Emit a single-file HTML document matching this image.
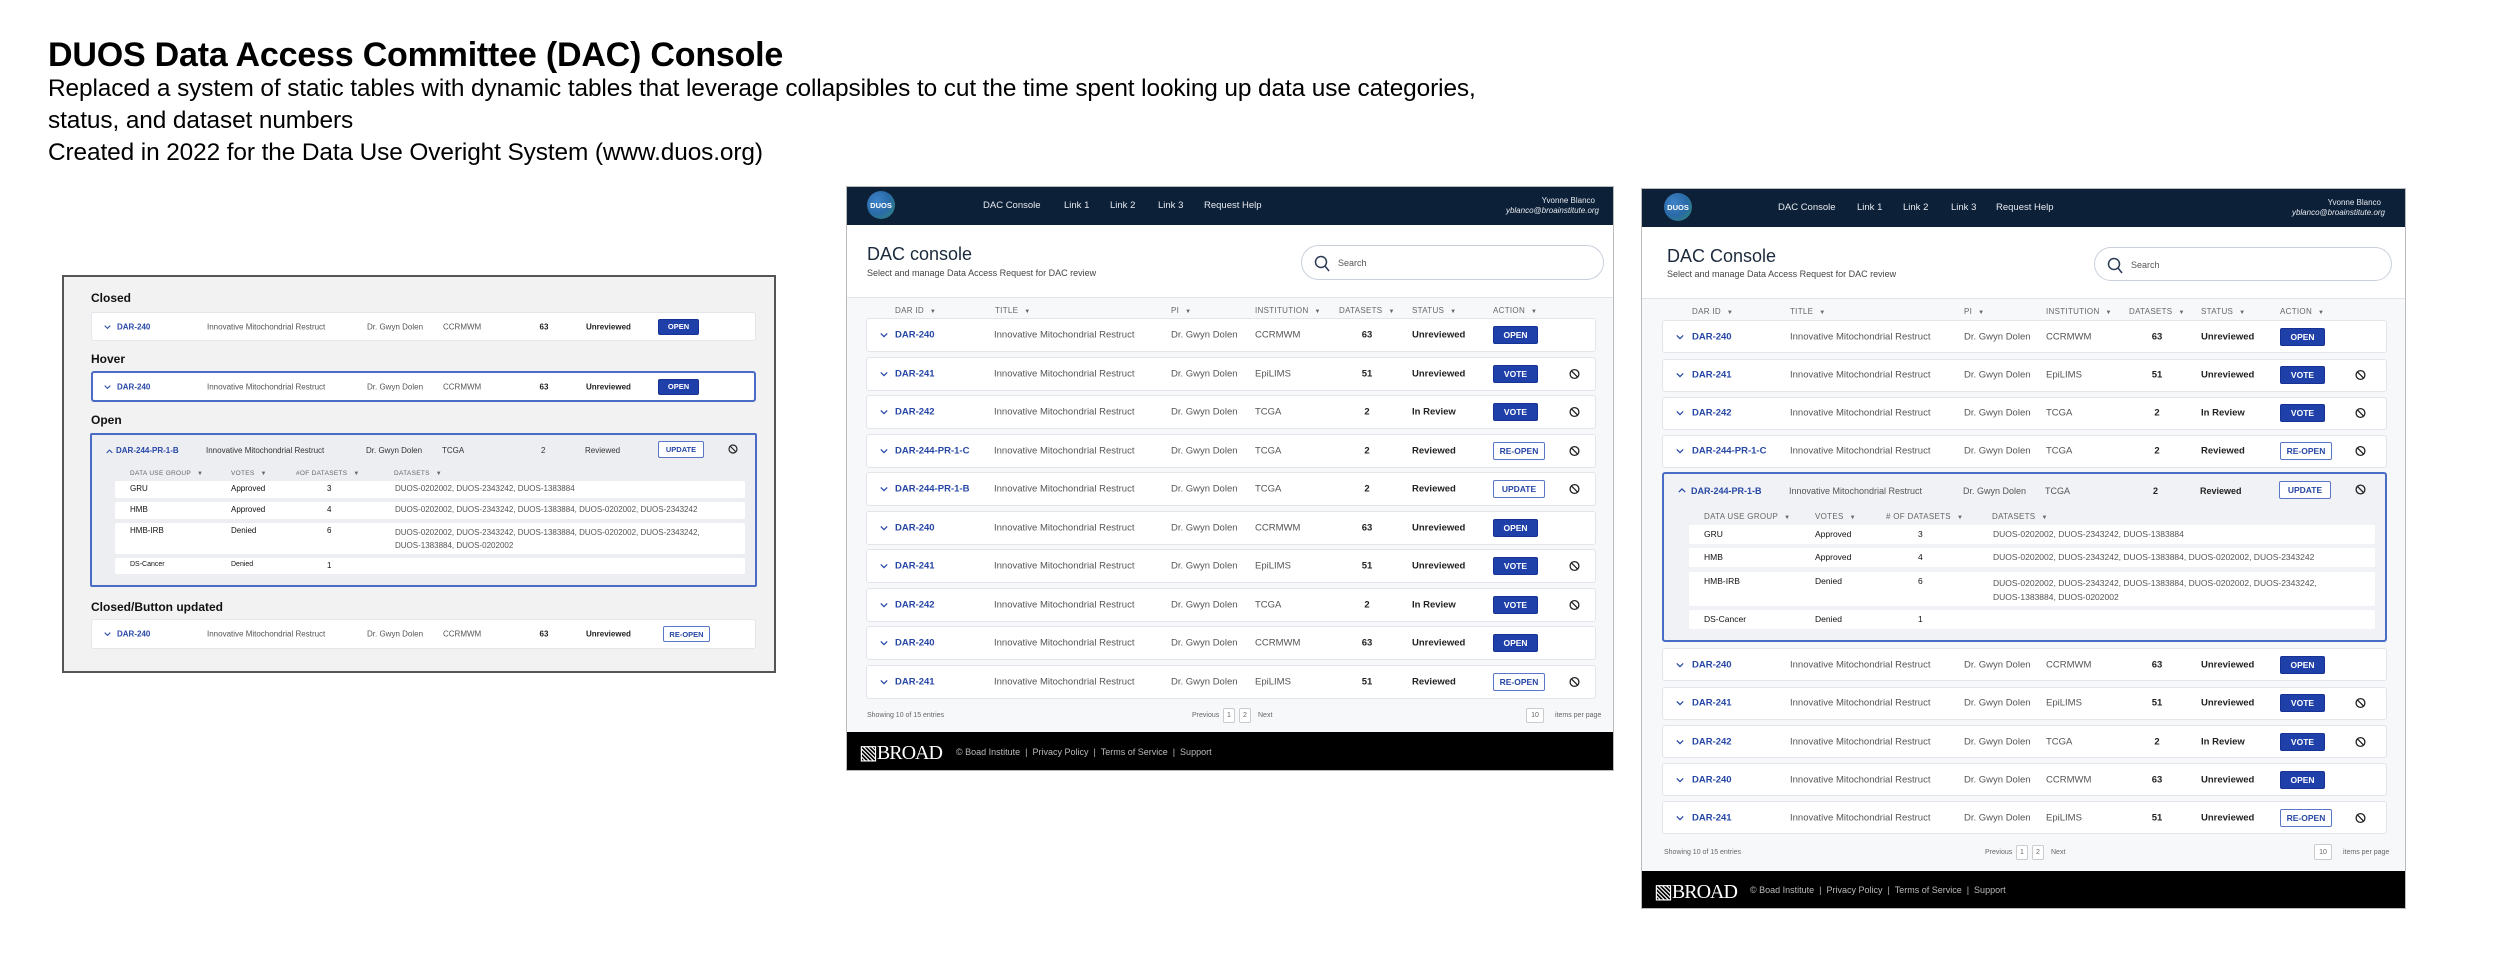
<!DOCTYPE html>
<html><head><meta charset="utf-8">
<style>
*{margin:0;padding:0;box-sizing:border-box}
body{width:2500px;height:974px;background:#fff;position:relative;overflow:hidden;font-family:"Liberation Sans",sans-serif;color:#111}
.a{position:absolute}
h1{position:absolute;left:48px;top:36px;font-size:34px;font-weight:bold;letter-spacing:-0.2px;color:#000}
.sub{position:absolute;left:48px;font-size:24.4px;color:#000;white-space:nowrap;letter-spacing:-0.1px}
.panel{position:absolute;overflow:hidden}
.row{position:absolute;background:#fff;border:1px solid #e3e5ea;border-radius:3px}
.row span,.row svg,.row b{position:absolute;top:50%;transform:translateY(-50%);white-space:nowrap}
.id{color:#2747a6;font-weight:bold}
.t{color:#555}
.st{color:#222;font-weight:bold}
.n{color:#222;font-weight:bold;transform:translate(-50%,-50%)!important}
.btn{display:flex;align-items:center;justify-content:center;font-weight:bold;border-radius:2px}
.fill{background:#1f40a8;color:#fff;border:1px solid #163294}
.out{background:#fff;color:#2747a6;border:1px solid #5a77c6}
.hd{position:absolute;color:#666;font-size:8px;letter-spacing:0.3px;white-space:nowrap}
.hd i{font-style:normal;font-size:6px;margin-left:6px}
.nav{position:absolute;background:#0c2038;left:0;right:0}
.nav span{position:absolute;color:#e6e9ef;font-size:9.5px;white-space:nowrap}
.logo{position:absolute;width:28px;height:28px;border-radius:50%;background:radial-gradient(circle at 35% 35%,#3e83c9,#2a6aa8 50%,#2e8a6f);color:#fff;font-size:7.5px;font-weight:bold;display:flex;align-items:center;justify-content:center}
.search{position:absolute;border:1px solid #c9d0dc;border-radius:20px;background:#fff}
.foot{position:absolute;background:#000;left:0;right:0}
.foot span{position:absolute;color:#bbb;font-size:9px;white-space:nowrap}
.pg{position:absolute;font-size:7px;color:#666;white-space:nowrap}
.box{position:absolute;border:1px solid #ccc;border-radius:2px;font-size:7px;color:#666;display:flex;align-items:center;justify-content:center;background:#fff}
.lbl{position:absolute;font-size:12px;font-weight:bold;color:#111}
.in{position:absolute;background:#fff;border-radius:2px}
.in span{position:absolute;white-space:nowrap}
</style></head><body>

<h1>DUOS Data Access Committee (DAC) Console</h1>
<div class="sub" style="top:75px">Replaced a system of static tables with dynamic tables that leverage collapsibles to cut the time spent looking up data use categories,</div>
<div class="sub" style="top:107px">status, and dataset numbers</div>
<div class="sub" style="top:139px">Created in 2022 for the Data Use Overight System (www.duos.org)</div>

<svg width="0" height="0" style="position:absolute">
<defs>
<symbol id="chev" viewBox="0 0 10 6"><path d="M1 1 L5 5 L9 1" fill="none" stroke="#2747a6" stroke-width="1.5"/></symbol>
<symbol id="chevu" viewBox="0 0 10 6"><path d="M1 5 L5 1 L9 5" fill="none" stroke="#2747a6" stroke-width="1.5"/></symbol>
<symbol id="ban" viewBox="0 0 12 12"><circle cx="6" cy="6" r="4.8" fill="none" stroke="#222" stroke-width="1.4"/><path d="M2.7 2.7 L9.3 9.3" stroke="#222" stroke-width="1.4"/></symbol>
</defs></svg>

<!-- LEFT PANEL -->
<div class="panel" style="left:62px;top:275px;width:714px;height:398px;background:#f2f2f2;border:2px solid #555">
</div>
<div class="lbl" style="left:91px;top:291px">Closed</div>
<div class="lbl" style="left:91px;top:352px">Hover</div>
<div class="lbl" style="left:91px;top:413px">Open</div>
<div class="lbl" style="left:91px;top:600px">Closed/Button updated</div>

<div class="row" style="left:91px;top:312px;width:665px;height:29px;font-size:8px">
<svg style="left:12px" width="7" height="5"><use href="#chev"/></svg>
<span class="id" style="left:25px">DAR-240</span><span class="t" style="left:115px">Innovative Mitochondrial Restruct</span><span class="t" style="left:275px">Dr. Gwyn Dolen</span><span class="t" style="left:351px">CCRMWM</span><span class="n" style="left:452px">63</span><span class="st" style="left:494px">Unreviewed</span>
<b class="btn fill" style="left:566px;width:41px;height:16px;font-size:7.5px">OPEN</b></div>

<div class="row" style="left:91px;top:371px;width:665px;height:31px;font-size:8px;border:2px solid #4a6cc4">
<svg style="left:11px" width="7" height="5"><use href="#chev"/></svg>
<span class="id" style="left:24px">DAR-240</span><span class="t" style="left:114px">Innovative Mitochondrial Restruct</span><span class="t" style="left:274px">Dr. Gwyn Dolen</span><span class="t" style="left:350px">CCRMWM</span><span class="n" style="left:451px">63</span><span class="st" style="left:493px">Unreviewed</span>
<b class="btn fill" style="left:565px;width:41px;height:16px;font-size:7.5px">OPEN</b></div>

<div class="a" style="left:90px;top:433px;width:667px;height:154px;background:#eceef1;border:2px solid #4a6cc4;border-radius:2px;overflow:hidden;font-size:8px">
<svg class="a" style="left:14px;top:14px" width="7" height="5"><use href="#chevu"/></svg>
<span class="a id" style="left:24px;top:11px">DAR-244-PR-1-B</span><span class="a" style="left:114px;top:11px;color:#333">Innovative Mitochondrial Restruct</span><span class="a" style="left:274px;top:11px;color:#333">Dr. Gwyn Dolen</span><span class="a" style="left:350px;top:11px;color:#333">TCGA</span><span class="a" style="left:449px;top:11px;color:#333">2</span><span class="a" style="left:493px;top:11px;color:#333">Reviewed</span>
<b class="a btn out" style="left:566px;top:6px;width:46px;height:17px;font-size:7.5px">UPDATE</b>
<svg class="a" style="left:636px;top:9px" width="10" height="10"><use href="#ban"/></svg>
<div class="hd" style="left:38px;top:35px;font-size:6.5px">DATA USE GROUP<i>▼</i></div>
<div class="hd" style="left:139px;top:35px;font-size:6.5px">VOTES<i>▼</i></div>
<div class="hd" style="left:204px;top:35px;font-size:6.5px">#OF DATASETS<i>▼</i></div>
<div class="hd" style="left:302px;top:35px;font-size:6.5px">DATASETS<i>▼</i></div>
<div class="in" style="left:23px;top:46px;width:630px;height:17px"><span style="left:15px;top:3px">GRU</span><span style="left:116px;top:3px">Approved</span><span style="left:212px;top:3px">3</span><span style="left:280px;top:3px;color:#555">DUOS-0202002, DUOS-2343242, DUOS-1383884</span></div>
<div class="in" style="left:23px;top:67px;width:630px;height:17px"><span style="left:15px;top:3px">HMB</span><span style="left:116px;top:3px">Approved</span><span style="left:212px;top:3px">4</span><span style="left:280px;top:3px;color:#555">DUOS-0202002, DUOS-2343242, DUOS-1383884, DUOS-0202002, DUOS-2343242</span></div>
<div class="in" style="left:23px;top:88px;width:630px;height:31px"><span style="left:15px;top:3px">HMB-IRB</span><span style="left:116px;top:3px">Denied</span><span style="left:212px;top:3px">6</span><span style="left:280px;top:3px;color:#555;line-height:13px">DUOS-0202002, DUOS-2343242, DUOS-1383884, DUOS-0202002, DUOS-2343242,<br>DUOS-1383884, DUOS-0202002</span></div>
<div class="in" style="left:23px;top:123px;width:630px;height:16px"><span style="left:15px;top:3px;font-size:7px">DS-Cancer</span><span style="left:116px;top:3px;font-size:7px">Denied</span><span style="left:212px;top:3px">1</span></div>
</div>

<div class="row" style="left:91px;top:619px;width:665px;height:30px;font-size:8px">
<svg style="left:12px" width="7" height="5"><use href="#chev"/></svg>
<span class="id" style="left:25px">DAR-240</span><span class="t" style="left:115px">Innovative Mitochondrial Restruct</span><span class="t" style="left:275px">Dr. Gwyn Dolen</span><span class="t" style="left:351px">CCRMWM</span><span class="n" style="left:452px">63</span><span class="st" style="left:494px">Unreviewed</span>
<b class="btn out" style="left:571px;width:47px;height:16px;font-size:7.5px">RE-OPEN</b></div>

<!-- MIDDLE PANEL -->
<div class="panel" style="left:846px;top:186px;width:768px;height:585px;background:#f7f8fa;border:1px solid #bbb">
<div style="position:absolute;left:0;top:0;right:0;height:111px;background:#fff;border-bottom:1px solid #e2e4e8"></div>
<div class="nav" style="top:0;height:38px">
<div class="logo" style="left:20px;top:4px">DUOS</div>
<span style="left:136px;top:13px">DAC Console</span><span style="left:217px;top:13px">Link 1</span><span style="left:263px;top:13px">Link 2</span><span style="left:311px;top:13px">Link 3</span><span style="left:357px;top:13px">Request Help</span>
<span style="right:18px;top:9px;font-size:8px">Yvonne Blanco</span><span style="right:14px;top:19px;font-size:8px;font-style:italic">yblanco@broainstitute.org</span>
</div>
<div class="a" style="left:20px;top:57px;font-size:18px;color:#1b2a3c">DAC console</div>
<div class="a" style="left:20px;top:81px;font-size:9px;color:#444">Select and manage Data Access Request for DAC review</div>
<div class="search" style="left:454px;top:58px;width:303px;height:35px">
<svg class="a" style="left:12px;top:9px" width="16" height="17" viewBox="0 0 16 17"><circle cx="7" cy="7" r="5.5" fill="none" stroke="#2b3a55" stroke-width="1.5"/><path d="M11 11 L15 16" stroke="#2b3a55" stroke-width="1.5"/></svg>
<span class="a" style="left:36px;top:12px;font-size:9px;color:#555">Search</span></div>
<div class="hd" style="left:48px;top:119px">DAR ID<i>▼</i></div><div class="hd" style="left:148px;top:119px">TITLE<i>▼</i></div><div class="hd" style="left:324px;top:119px">PI<i>▼</i></div><div class="hd" style="left:408px;top:119px">INSTITUTION<i>▼</i></div><div class="hd" style="left:492px;top:119px">DATASETS<i>▼</i></div><div class="hd" style="left:565px;top:119px">STATUS<i>▼</i></div><div class="hd" style="left:646px;top:119px">ACTION<i>▼</i></div>
<div class="pg" style="left:20px;top:525px">Showing 10 of 15 entries</div>
<div class="pg" style="left:345px;top:525px">Previous</div><div class="box" style="left:376px;top:521px;width:12px;height:15px">1</div><div class="box" style="left:392px;top:521px;width:12px;height:15px">2</div><div class="pg" style="left:411px;top:525px">Next</div>
<div class="box" style="left:679px;top:521px;width:18px;height:15px">10</div><div class="pg" style="left:708px;top:525px">items per page</div>
<div class="foot" style="top:545px;height:40px">
<span style="left:12px;top:8px;font-family:'Liberation Serif',serif;font-size:20px;color:#fff;letter-spacing:-1px">▧BROAD</span>
<span style="left:109px;top:15px">© Boad Institute &nbsp;|&nbsp; Privacy Policy &nbsp;|&nbsp; Terms of Service &nbsp;|&nbsp; Support</span></div>
</div>

<!-- RIGHT PANEL -->
<div class="panel" style="left:1641px;top:188px;width:765px;height:721px;background:#f7f8fa;border:1px solid #bbb">
<div style="position:absolute;left:0;top:0;right:0;height:110px;background:#fff;border-bottom:1px solid #e2e4e8"></div>
<div class="nav" style="top:0;height:38px">
<div class="logo" style="left:22px;top:4px">DUOS</div>
<span style="left:136px;top:13px">DAC Console</span><span style="left:215px;top:13px">Link 1</span><span style="left:261px;top:13px">Link 2</span><span style="left:309px;top:13px">Link 3</span><span style="left:354px;top:13px">Request Help</span>
<span style="right:24px;top:9px;font-size:8px">Yvonne Blanco</span><span style="right:20px;top:19px;font-size:8px;font-style:italic">yblanco@broainstitute.org</span>
</div>
<div class="a" style="left:25px;top:57px;font-size:18px;color:#1b2a3c">DAC Console</div>
<div class="a" style="left:25px;top:80px;font-size:9px;color:#444">Select and manage Data Access Request for DAC review</div>
<div class="search" style="left:452px;top:58px;width:298px;height:34px">
<svg class="a" style="left:12px;top:9px" width="16" height="17" viewBox="0 0 16 17"><circle cx="7" cy="7" r="5.5" fill="none" stroke="#2b3a55" stroke-width="1.5"/><path d="M11 11 L15 16" stroke="#2b3a55" stroke-width="1.5"/></svg>
<span class="a" style="left:36px;top:12px;font-size:9px;color:#555">Search</span></div>
<div class="hd" style="left:50px;top:118px">DAR ID<i>▼</i></div><div class="hd" style="left:148px;top:118px">TITLE<i>▼</i></div><div class="hd" style="left:322px;top:118px">PI<i>▼</i></div><div class="hd" style="left:404px;top:118px">INSTITUTION<i>▼</i></div><div class="hd" style="left:487px;top:118px">DATASETS<i>▼</i></div><div class="hd" style="left:559px;top:118px">STATUS<i>▼</i></div><div class="hd" style="left:638px;top:118px">ACTION<i>▼</i></div>
<div class="pg" style="left:22px;top:660px">Showing 10 of 15 entries</div>
<div class="pg" style="left:343px;top:660px">Previous</div><div class="box" style="left:374px;top:656px;width:12px;height:15px">1</div><div class="box" style="left:390px;top:656px;width:12px;height:15px">2</div><div class="pg" style="left:409px;top:660px">Next</div>
<div class="box" style="left:672px;top:655px;width:18px;height:16px">10</div><div class="pg" style="left:701px;top:660px">items per page</div>
<div class="foot" style="top:682px;height:39px">
<span style="left:12px;top:8px;font-family:'Liberation Serif',serif;font-size:20px;color:#fff;letter-spacing:-1px">▧BROAD</span>
<span style="left:108px;top:14px">© Boad Institute &nbsp;|&nbsp; Privacy Policy &nbsp;|&nbsp; Terms of Service &nbsp;|&nbsp; Support</span></div>
</div>

<div id="mid"></div>
<div id="right"></div>

<div class="a" style="left:1662px;top:472px;width:725px;height:170px;background:#f1f2f5;border:2px solid #4a6cc4;border-radius:3px;font-size:9px">
<svg class="a" style="left:14px;top:14px" width="8" height="5"><use href="#chevu"/></svg>
<span class="a id" style="left:27px;top:12px">DAR-244-PR-1-B</span><span class="a t" style="left:125px;top:12px">Innovative Mitochondrial Restruct</span><span class="a t" style="left:299px;top:12px">Dr. Gwyn Dolen</span><span class="a t" style="left:381px;top:12px">TCGA</span><span class="a st" style="left:489px;top:12px">2</span><span class="a st" style="left:536px;top:12px">Reviewed</span>
<b class="a btn out" style="left:615px;top:7px;width:52px;height:18px;font-size:8.5px">UPDATE</b>
<svg class="a" style="left:691px;top:10px" width="11" height="11"><use href="#ban"/></svg>
<div class="hd" style="left:40px;top:38px">DATA USE GROUP<i>▼</i></div><div class="hd" style="left:151px;top:38px">VOTES<i>▼</i></div><div class="hd" style="left:222px;top:38px"># OF DATASETS<i>▼</i></div><div class="hd" style="left:328px;top:38px">DATASETS<i>▼</i></div>
<div class="in" style="left:25px;top:51px;width:686px;height:19px;font-size:8.5px"><span style="left:15px;top:4px">GRU</span><span style="left:126px;top:4px">Approved</span><span style="left:229px;top:4px">3</span><span style="left:304px;top:4px;color:#555">DUOS-0202002, DUOS-2343242, DUOS-1383884</span></div>
<div class="in" style="left:25px;top:74px;width:686px;height:19px;font-size:8.5px"><span style="left:15px;top:4px">HMB</span><span style="left:126px;top:4px">Approved</span><span style="left:229px;top:4px">4</span><span style="left:304px;top:4px;color:#555">DUOS-0202002, DUOS-2343242, DUOS-1383884, DUOS-0202002, DUOS-2343242</span></div>
<div class="in" style="left:25px;top:98px;width:686px;height:34px;font-size:8.5px"><span style="left:15px;top:4px">HMB-IRB</span><span style="left:126px;top:4px">Denied</span><span style="left:229px;top:4px">6</span><span style="left:304px;top:4px;color:#555;line-height:14px">DUOS-0202002, DUOS-2343242, DUOS-1383884, DUOS-0202002, DUOS-2343242,<br>DUOS-1383884, DUOS-0202002</span></div>
<div class="in" style="left:25px;top:136px;width:686px;height:19px;font-size:8.5px"><span style="left:15px;top:4px">DS-Cancer</span><span style="left:126px;top:4px">Denied</span><span style="left:229px;top:4px">1</span></div>
</div>

<script>
function row(L,top,W,H,o,d){
 var b=d[5]=='OPEN'||d[5]=='VOTE'?'fill':'out';
 var bw=d[5]=='OPEN'||d[5]=='VOTE'?45:52;
 return '<div class="row" style="left:'+L+'px;top:'+top+'px;width:'+W+'px;height:'+H+'px;font-size:9.5px">'+
 '<svg style="left:'+o[0]+'px" width="8" height="5"><use href="#chev"/></svg>'+
 '<span class="id" style="left:'+o[1]+'px">'+d[0]+'</span>'+
 '<span class="t" style="left:'+o[2]+'px">Innovative Mitochondrial Restruct</span>'+
 '<span class="t" style="left:'+o[3]+'px">Dr. Gwyn Dolen</span>'+
 '<span class="t" style="left:'+o[4]+'px">'+d[1]+'</span>'+
 '<span class="n" style="left:'+o[5]+'px">'+d[2]+'</span>'+
 '<span class="st" style="left:'+o[6]+'px">'+d[3]+'</span>'+
 '<b class="btn '+b+'" style="left:'+o[7]+'px;width:'+bw+'px;height:18px;font-size:8.5px">'+d[5]+'</b>'+
 (d[4]?'<svg style="left:'+o[8]+'px" width="11" height="11"><use href="#ban"/></svg>':'')+'</div>';
}
var A=['DAR-240','CCRMWM','63','Unreviewed',0,'OPEN'],B=['DAR-241','EpiLIMS','51','Unreviewed',1,'VOTE'],C=['DAR-242','TCGA','2','In Review',1,'VOTE'],
D=['DAR-244-PR-1-C','TCGA','2','Reviewed',1,'RE-OPEN'],E=['DAR-244-PR-1-B','TCGA','2','Reviewed',1,'UPDATE'],F=['DAR-241','EpiLIMS','51','Reviewed',1,'RE-OPEN'],G=['DAR-241','EpiLIMS','51','Unreviewed',1,'RE-OPEN'];
var mo=[13,28,127,304,388,500,545,626,702];
var md=[A,B,C,D,E,A,B,C,A,F],h='';
for(var i=0;i<10;i++)h+=row(866,318+i*38.5,730,34,mo,md[i]);
document.getElementById('mid').innerHTML=h;
var ro=[13,29,127,301,383,494,538,617,692];
var rt=[320,358.5,396.7,434.7,648,686.5,725,763,801],rd=[A,B,C,D,A,B,C,A,G];h='';
for(var i=0;i<9;i++)h+=row(1662,rt[i],725,33,ro,rd[i]);
document.getElementById('right').innerHTML=h;
</script>
</body></html>
